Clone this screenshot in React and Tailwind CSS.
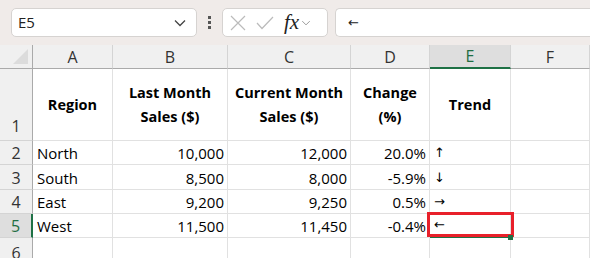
import React from "react";

const font = { fontFamily: '"Open Sans", "Liberation Sans", sans-serif' };
const arrowFont = { fontFamily: '"DejaVu Sans", sans-serif' };

const cols = ["A", "B", "C", "D", "E", "F"];

const rows = [
  ["North", "10,000", "12,000", "20.0%", "↑"],
  ["South", "8,500", "8,000", "-5.9%", "↓"],
  ["East", "9,200", "9,250", "0.5%", "→"],
  ["West", "11,500", "11,450", "-0.4%", "←"],
];

const Chevron = ({ className }) => (
  <svg viewBox="0 0 12 8" className={className} fill="none" stroke="currentColor" strokeWidth="1.3">
    <path d="M1 1.5 L6 6.5 L11 1.5" />
  </svg>
);

const TopBar = () => (
  <div className="flex items-center h-[45px] bg-[#f0ebe9] pl-[11px]">
    <div className="flex items-center justify-between w-[186px] h-[29px] bg-white border border-[#d6d3d1] rounded-[5px] pl-[6px] pr-[10px]">
      <span className="text-[15px] text-[#222]">E5</span>
      <Chevron className="w-[12px] h-[8px] text-[#444]" />
    </div>
    <div className="flex flex-col gap-[2px] mx-[11px]">
      <span className="w-[3px] h-[3px] bg-[#555]" />
      <span className="w-[3px] h-[3px] bg-[#555]" />
      <span className="w-[3px] h-[3px] bg-[#555]" />
    </div>
    <div className="flex items-center w-[106px] h-[29px] bg-white border border-[#d6d3d1] rounded-[5px] pl-[7px] gap-[10px]">
      <svg viewBox="0 0 16 16" className="w-[16px] h-[16px] text-[#bbb]" fill="none" stroke="currentColor" strokeWidth="1.2">
        <path d="M1 1 L15 15 M15 1 L1 15" />
      </svg>
      <svg viewBox="0 0 18 14" className="w-[18px] h-[14px] text-[#bbb]" fill="none" stroke="currentColor" strokeWidth="1.2">
        <path d="M1 7 L6 12.5 L17 1" />
      </svg>
      <span className="flex items-center gap-[2px]">
        <span className="text-[21px] italic text-[#222] leading-none" style={{ fontFamily: '"Liberation Serif", serif' }}>
          fx
        </span>
        <Chevron className="w-[10px] h-[6px] text-[#999]" />
      </span>
    </div>
    <div className="flex items-center flex-1 h-[29px] bg-white border border-[#d6d3d1] border-r-0 rounded-l-[5px] ml-[7px] pl-[12px]">
      <span className="text-[13px] text-[#222]" style={arrowFont}>←</span>
    </div>
  </div>
);

const cell = "border-r border-b border-[#e1e1e1] bg-white";

export default function App() {
  return (
    <div className="w-[590px] h-[258px] overflow-hidden bg-white" style={font}>
      <TopBar />
      <div className="grid grid-cols-[33px_80px_115px_123px_79px_81px_1fr] grid-rows-[24px_72px_24px_25px_24px_24px_24px]">
        <div className="bg-[#f0f0f0] border-r border-b border-[#aaa] relative">
          <div className="absolute right-[4px] bottom-[4px] w-0 h-0 border-l-[15px] border-l-transparent border-b-[15px] border-b-[#dcdcdc]" />
        </div>
        {cols.map((c) => (
          <div
            key={c}
            className={`flex items-center justify-center text-[16px] border-r border-[#d4d4d4] ${
              c === "E"
                ? "bg-[#dedede] text-[#1e6e43] border-b-2 border-b-[#1e7145]"
                : "bg-[#f0f0f0] text-[#333] border-b border-b-[#aaa]"
            }`}
          >
            {c}
          </div>
        ))}

        <div className="bg-[#f0f0f0] border-r border-r-[#aaa] border-b border-b-[#d4d4d4] flex items-end justify-center pb-[2px] text-[16px] text-[#333]">
          1
        </div>
        {["Region", "Last Month\nSales ($)", "Current Month\nSales ($)", "Change\n(%)", "Trend"].map((h) => (
          <div key={h} className={`${cell} flex items-center justify-center text-center font-bold text-[14.5px] leading-[24px] whitespace-pre-line text-black`}>
            {h}
          </div>
        ))}
        <div className={cell} />

        {rows.map((r, i) => {
          const sel = i === 3;
          return (
            <React.Fragment key={r[0]}>
              <div
                className={`flex items-end justify-center text-[16px] leading-[22px] border-b border-[#d4d4d4] ${
                  sel ? "bg-[#dedede] text-[#1e6e43] border-r-2 border-r-[#1e7145]" : "bg-[#f0f0f0] text-[#333] border-r border-r-[#aaa]"
                }`}
              >
                {i + 2}
              </div>
              <div className={`${cell} flex items-end px-[4px] text-[15px] leading-[22px] text-black`}>{r[0]}</div>
              <div className={`${cell} flex items-end justify-end px-[3px] text-[15px] leading-[22px] text-black`}>{r[1]}</div>
              <div className={`${cell} flex items-end justify-end px-[3px] text-[15px] leading-[22px] text-black`}>{r[2]}</div>
              <div className={`${cell} flex items-end justify-end px-[3px] text-[15px] leading-[22px] text-black`}>{r[3]}</div>
              <div
                className={`${cell} relative flex items-end px-[4px] text-[13px] leading-[22px] text-black ${sel ? "border-b-2 border-b-[#1e7145]" : ""}`}
                style={arrowFont}
              >
                {r[4]}
                {sel && (
                  <>
                    <div className="absolute left-[-3px] right-[-4px] top-[-2px] bottom-[-1px] border-[3px] border-[#e8202a]" />
                    <div className="absolute right-[-3px] bottom-[-4px] w-[5px] h-[5px] bg-[#1e7145]" />
                  </>
                )}
              </div>
              <div className={cell} />
            </React.Fragment>
          );
        })}

        <div className="bg-[#f0f0f0] border-r border-[#aaa] flex items-start justify-center pt-[4px] text-[16px] leading-[22px] text-[#333]">6</div>
        <div className={cell} />
        <div className={cell} />
        <div className={cell} />
        <div className={cell} />
        <div className={cell} />
        <div className={cell} />
      </div>
    </div>
  );
}
